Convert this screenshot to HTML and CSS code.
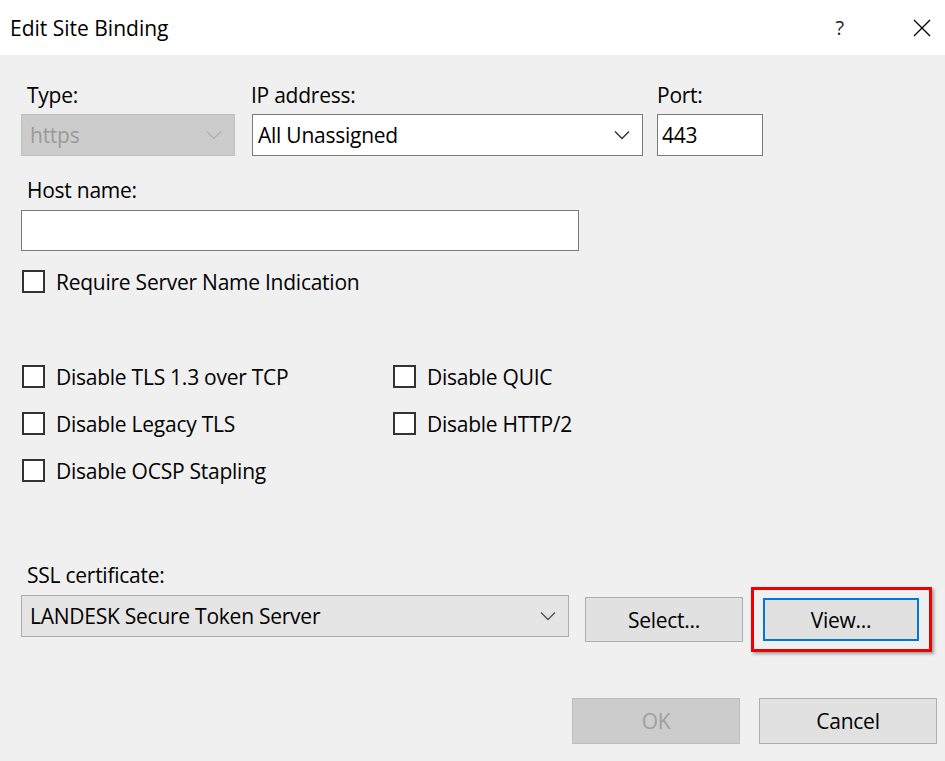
FILE: index.html
```html
<!DOCTYPE html>
<html>
<head>
<meta charset="utf-8">
<link rel="stylesheet" href="styles.css">
</head>
<body>
<div class="dialog">
  <div class="titlebar">
    <span class="title">Edit Site Binding</span>
    <span class="help">?</span>
    <span class="close"><svg width="18" height="18" viewBox="0 0 18 18"><path d="M1 1L17 17M17 1L1 17" stroke="#000" stroke-width="1.3" fill="none"/></svg></span>
  </div>
  <div class="body">
    <div class="row1">
      <div class="fg fg-type">
        <div class="label lbl-type">Type:</div>
        <div class="select disabled"><span>https</span><svg class="chev" width="16" height="10" viewBox="0 0 16 10"><path d="M1 1.5L8 8.5L15 1.5" stroke="#b0b0b0" stroke-width="1.4" fill="none"/></svg></div>
      </div>
      <div class="fg fg-ip">
        <div class="label">IP address:</div>
        <div class="select white"><span>All Unassigned</span><svg class="chev" width="16" height="10" viewBox="0 0 16 10"><path d="M1 1.5L8 8.5L15 1.5" stroke="#333" stroke-width="1.4" fill="none"/></svg></div>
      </div>
      <div class="fg fg-port">
        <div class="label">Port:</div>
        <div class="input port"><span>443</span></div>
      </div>
    </div>
    <div class="host">
      <div class="label lbl-host">Host name:</div>
      <div class="input hostinput"></div>
    </div>
    <div class="check sni"><span class="box"></span><span>Require Server Name Indication</span></div>
    <div class="checkgrid">
      <div class="check"><span class="box"></span><span>Disable TLS 1.3 over TCP</span></div>
      <div class="check"><span class="box"></span><span>Disable QUIC</span></div>
      <div class="check"><span class="box"></span><span>Disable Legacy TLS</span></div>
      <div class="check"><span class="box"></span><span>Disable HTTP/2</span></div>
      <div class="check"><span class="box"></span><span>Disable OCSP Stapling</span></div>
    </div>
    <div class="label lbl-ssl">SSL certificate:</div>
    <div class="sslrow">
      <div class="select cert"><span>LANDESK Secure Token Server</span><svg class="chev" width="16" height="10" viewBox="0 0 16 10"><path d="M1 1.5L8 8.5L15 1.5" stroke="#555" stroke-width="1.4" fill="none"/></svg></div>
      <div class="btn btn-select">Select...</div>
      <div class="btn btn-view">View...</div>
    </div>
    <div class="footer">
      <div class="btn btn-ok">OK</div>
      <div class="btn btn-cancel">Cancel</div>
    </div>
  </div>
</div>
</body>
</html>
```
FILE: styles.css
```css
html, body {
  margin: 0;
  padding: 0;
}
body {
  width: 945px;
  height: 761px;
  overflow: hidden;
  background: #f0f0f0;
  font-family: "Open Sans", "Noto Sans", sans-serif;
  font-size: 21px;
  color: #000;
  letter-spacing: -0.25px;
}
.dialog {
  width: 945px;
  height: 761px;
}
.titlebar {
  height: 55px;
  background: #fff;
  display: flex;
  align-items: center;
  position: relative;
}
.title {
  font-size: 21px;
  margin-left: 10px;
  flex: 1;
  letter-spacing: 0;
}
.help {
  font-size: 20px;
  color: #222;
  margin-right: 69px;
}
.close {
  display: flex;
  margin-right: 14px;
}
.body {
  padding: 28px 0 0 21px;
}
.row1 {
  display: flex;
  align-items: flex-start;
}
.fg-type { width: 214px; }
.fg-ip { width: 391px; margin-left: 17px; }
.fg-port { width: 106px; margin-left: 14px; }
.label {
  height: 31px;
  line-height: 24px;
  color: #000;
}
.lbl-type { padding-left: 6px; }
.fg-ip .label { padding-left: 0; margin-left: -1px; }
.select, .input {
  box-sizing: border-box;
  height: 42px;
  display: flex;
  align-items: center;
  border: 1px solid #7a7a7a;
  background: #fff;
}
.select span, .input span {
  flex: 1;
  white-space: nowrap;
}
.select.disabled {
  background: #cccccc;
  border-color: #bfbfbf;
  color: #9a9a9a;
  padding-left: 8px;
}
.select.white {
  padding-left: 5px;
}
.chev {
  margin-right: 12px;
}
.input.port {
  padding-left: 4px;
}
.host {
  margin-top: 22px;
}
.lbl-host {
  height: 32px;
  padding-left: 6px;
}
.hostinput {
  width: 558px;
  height: 41px;
}
.check {
  display: flex;
  align-items: center;
  height: 23px;
  white-space: nowrap;
}
.box {
  box-sizing: border-box;
  width: 23px;
  height: 23px;
  border: 2px solid #333;
  background: #fff;
  margin-left: 1px;
  margin-right: 11px;
  flex: none;
}
.sni {
  margin-top: 19px;
}
.checkgrid {
  margin-top: 72px;
  display: grid;
  grid-template-columns: 371px auto;
  row-gap: 24px;
}
.lbl-ssl {
  margin-top: 81px;
  height: 32px;
  padding-left: 6px;
}
.sslrow {
  display: flex;
  align-items: flex-start;
}
.select.cert {
  width: 548px;
  background: #e5e5e5;
  border-color: #adadad;
  padding-left: 8px;
}
.btn {
  box-sizing: border-box;
  display: flex;
  align-items: center;
  justify-content: center;
  background: #e1e1e1;
  border: 1px solid #adadad;
  color: #000;
}
.btn-select {
  width: 158px;
  height: 45px;
  margin-left: 16px;
  margin-top: 2px;
}
.btn-view {
  width: 156px;
  height: 43px;
  margin-left: 20px;
  margin-top: 3px;
  border: 2px solid #0078d7;
  position: relative;
}
.btn-view::after {
  content: "";
  position: absolute;
  left: -14px;
  top: -13px;
  right: -15px;
  bottom: -13px;
  border: 3px solid #ee0000;
  box-shadow: 2px 2px 3px rgba(0,0,0,0.35);
}
.footer {
  display: flex;
  margin-top: 56px;
  margin-left: 551px;
}
.btn-ok {
  width: 168px;
  height: 46px;
  background: #cccccc;
  border-color: #bfbfbf;
  color: #a0a0a0;
}
.btn-cancel {
  width: 178px;
  height: 46px;
  margin-left: 19px;
}
```
